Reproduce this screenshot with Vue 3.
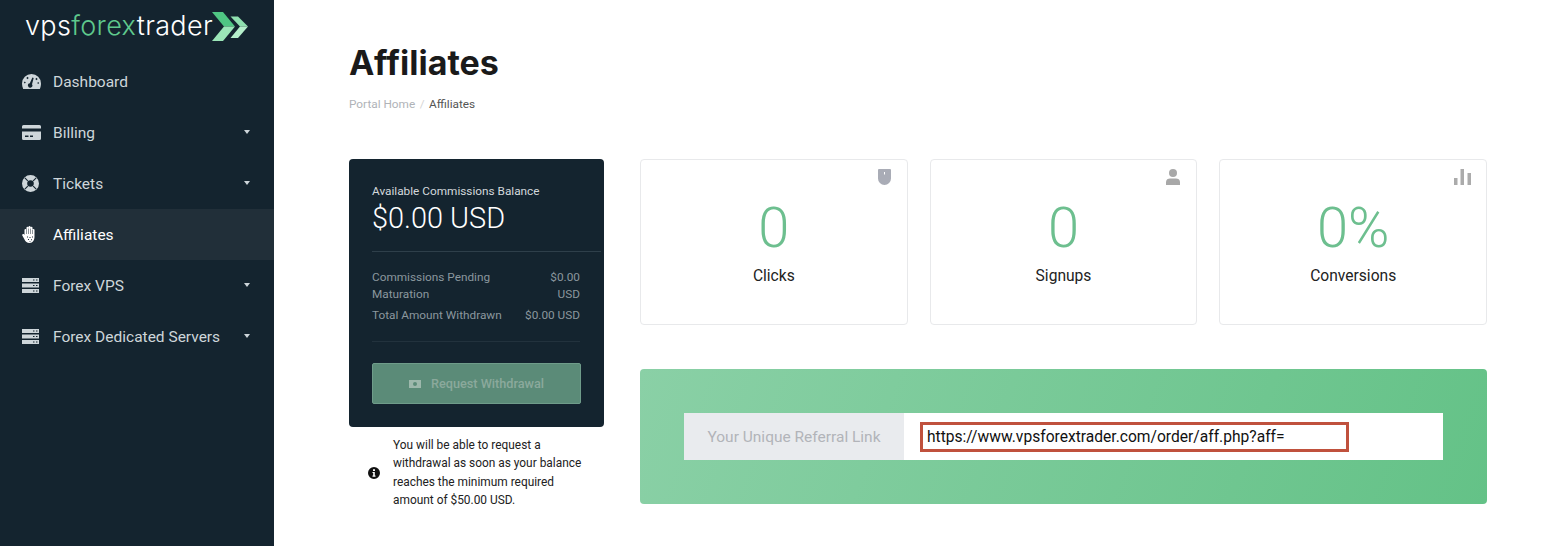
<template>
  <div class="layout">
    <aside class="sidebar">
      <div class="logo">
        <span class="logo-text">vps<span class="logo-green">forex</span>trader</span>
        <svg class="logo-mark" width="36" height="29" viewBox="0 0 36 29">
          <path d="M0 0H11L23 14.500H12Z" fill="#4fc583" />
          <path d="M12 14.500H23L11 29H0Z" fill="#9be6b8" />
          <path d="M18.500 4.500H26L36 14.500H28Z" fill="#8fe0af" />
          <path d="M28 14.500H36L26 26H18.500Z" fill="#b5efcb" />
        </svg>
      </div>
      <nav>
        <a v-for="item in menu" :key="item.label" class="nav-item" :class="{ active: item.active }">
          <span class="nav-icon">
            <svg v-if="item.icon === 'gauge'" width="19" height="15" viewBox="0 0 19 15">
              <path fill-rule="evenodd" d="M9.500 0A9.500 9.500 0 0 1 19 9.500C19 11.200 18.600 13.300 17.800 15H1.200C.4 13.300 0 11.200 0 9.500A9.500 9.500 0 0 1 9.500 0ZM10.400 3.500 7.800 9.200A2.200 2.200 0 1 0 10 10.200L11.700 4ZM5.500 2.800 4.300 4 5.500 5.200 6.700 4ZM14.500 3.800 13.300 5 14.500 6.200 15.700 5ZM2.800 7.500 1.800 8.500 2.800 9.500 3.800 8.500ZM16.200 8 15.200 9 16.200 10 17.200 9Z" fill="#ced6da" />
            </svg>
            <svg v-else-if="item.icon === 'card'" width="19" height="15" viewBox="0 0 19 15">
              <path fill-rule="evenodd" d="M1.500 0H17.500A1.500 1.500 0 0 1 19 1.500V3.500H0V1.500A1.500 1.500 0 0 1 1.500 0ZM0 6.500H19V13.500A1.500 1.500 0 0 1 17.500 15H1.500A1.500 1.500 0 0 1 0 13.500ZM3 10.500V12H6.500V10.500ZM8 10.500V12H11V10.500Z" fill="#ced6da" />
            </svg>
            <svg v-else-if="item.icon === 'lifebuoy'" width="17" height="17" viewBox="0 0 17 17">
              <path fill-rule="evenodd" d="M8.500 0A8.500 8.500 0 1 1 8.500 17A8.500 8.500 0 1 1 8.500 0ZM8.500 5.200A3.300 3.300 0 1 0 8.500 11.800A3.300 3.300 0 1 0 8.500 5.200Z" fill="#ced6da" />
              <path d="M2.800 2.800 5.800 5.800M14.200 2.800 11.200 5.800M2.800 14.200 5.800 11.200M14.200 14.200 11.200 11.200" stroke="#14242f" stroke-width="1.100" />
            </svg>
            <svg v-else-if="item.icon === 'hand'" width="15" height="17" viewBox="0 0 15 17">
              <path fill-rule="evenodd" d="M2.500 4A1 1 0 0 1 4.500 4V1.800A1 1 0 0 1 6.500 1.800V1A1 1 0 0 1 8.500 1V1.800A1 1 0 0 1 10.500 1.800V4A1 1 0 0 1 12.500 4V10.500C12.500 14 11 17 7.500 17C5 17 3.500 15.500 2.500 13.500L.3 9.500C-.2 8.500 1.200 7.300 2 8.300L2.500 9ZM4.500 3.500V8H5V3.500ZM6.500 2.500V8H7V2.500ZM8.500 2.500V8H9V2.500ZM10.500 4V8H11V4ZM5 10.500H6V11.500H5ZM7.500 11H8.500V12H7.500ZM10 10.500H11V11.500H10ZM6 13H7V14H6ZM9 13.200H10V14.200H9ZM7.500 15H8.500V15.800H7.500Z" fill="#ffffff" />
            </svg>
            <svg v-else width="17" height="15" viewBox="0 0 17 15">
              <path fill-rule="evenodd" d="M0 0H17V4H0ZM11 1.500V2.500H12.500V1.500ZM14 1.500V2.500H15.500V1.500ZM0 5.500H17V9.500H0ZM11 7V8H12.500V7ZM14 7V8H15.500V7ZM0 11H17V15H0ZM11 12.500V13.500H12.500V12.500ZM14 12.500V13.500H15.500V12.500Z" fill="#ced6da" />
            </svg>
          </span>
          <span class="nav-label">{{ item.label }}</span>
          <span v-if="item.caret" class="caret"></span>
        </a>
      </nav>
    </aside>

    <main class="content">
      <h1>Affiliates</h1>
      <div class="breadcrumb">
        <span class="crumb-link">Portal Home</span>
        <span class="crumb-sep">/</span>
        <span>Affiliates</span>
      </div>

      <div class="columns">
        <div class="left-col">
          <div class="balance">
            <div class="balance-label">Available Commissions Balance</div>
            <div class="balance-value">$0.00 USD</div>
            <div class="balance-rows">
              <div class="balance-row">
                <span>Commissions Pending Maturation</span>
                <span class="amount narrow">$0.00 USD</span>
              </div>
              <div class="balance-row">
                <span>Total Amount Withdrawn</span>
                <span class="amount">$0.00 USD</span>
              </div>
            </div>
            <button class="withdraw" disabled>
              <svg width="12" height="8" viewBox="0 0 12 8">
                <path fill-rule="evenodd" d="M0 0H12V8H0ZM6 2A2 2 0 1 0 6 6A2 2 0 1 0 6 2Z" fill="#9db8ac" />
              </svg>
              Request Withdrawal
            </button>
          </div>
          <div class="notice">
            <svg class="notice-icon" width="12" height="12" viewBox="0 0 12 12">
              <path fill-rule="evenodd" d="M6 0A6 6 0 1 1 6 12A6 6 0 1 1 6 0ZM5 2.300V4H7V2.300ZM4.500 5V6H5.200V8.500H4.500V9.700H7.500V8.500H6.800V5Z" fill="#111" />
            </svg>
            <p>You will be able to request a withdrawal as soon as your balance reaches the minimum required amount of $50.00 USD.</p>
          </div>
        </div>

        <div class="right-col">
          <div class="stats">
            <div v-for="stat in stats" :key="stat.label" class="stat">
              <svg v-if="stat.icon === 'mouse'" class="stat-icon" width="13" height="16" viewBox="0 0 13 16">
                <path fill-rule="evenodd" d="M1 0H12A1 1 0 0 1 13 1V9.500A6.500 6.500 0 0 1 0 9.500V1A1 1 0 0 1 1 0ZM6 3V5.500H7V3Z" fill="#a9acb6" />
              </svg>
              <svg v-else-if="stat.icon === 'user'" class="stat-icon" width="14" height="16" viewBox="0 0 14 16">
                <circle cx="7" cy="4" r="4" fill="#a8a8a8" />
                <path d="M0 16V13C0 10.500 2 9.500 4 9.500H10C12 9.500 14 10.500 14 13V16Z" fill="#a8a8a8" />
              </svg>
              <svg v-else class="stat-icon chart" width="17" height="16" viewBox="0 0 17 16">
                <path d="M0 9H3.500V16H0ZM6.500 0H10V16H6.500ZM13.500 4H17V16H13.500Z" fill="#ababab" />
              </svg>
              <div class="stat-value">{{ stat.value }}</div>
              <div class="stat-label">{{ stat.label }}</div>
            </div>
          </div>

          <div class="referral">
            <div class="referral-group">
              <div class="referral-label">Your Unique Referral Link</div>
              <div class="referral-input">
                <span class="referral-url">https://www.vpsforextrader.com/order/aff.php?aff=</span>
              </div>
            </div>
          </div>
        </div>
      </div>
    </main>
  </div>
</template>

<script setup>
const menu = [
  { label: 'Dashboard', icon: 'gauge' },
  { label: 'Billing', icon: 'card', caret: true },
  { label: 'Tickets', icon: 'lifebuoy', caret: true },
  { label: 'Affiliates', icon: 'hand', active: true },
  { label: 'Forex VPS', icon: 'server', caret: true },
  { label: 'Forex Dedicated Servers', icon: 'server', caret: true }
]

const stats = [
  { label: 'Clicks', value: '0', icon: 'mouse' },
  { label: 'Signups', value: '0', icon: 'user' },
  { label: 'Conversions', value: '0%', icon: 'chart' }
]
</script>

<style>
html, body {
  margin: 0;
  background: #fff;
}
</style>

<style scoped>
.layout {
  display: flex;
  height: 546px;
  overflow: hidden;
  font-family: Roboto, "Liberation Sans", sans-serif;
  color: #1a1a1a;
}

.sidebar {
  width: 274px;
  flex-shrink: 0;
  background: #14242f;
}

.logo {
  height: 56px;
  padding: 12px 0 0 25px;
  box-sizing: border-box;
  display: flex;
  align-items: flex-start;
  gap: 0;
}

.logo-text {
  width: 187px;
  font-family: Inter, sans-serif;
  font-size: 27px;
  font-weight: 300;
  letter-spacing: 0.350px;
  line-height: 27px;
  white-space: nowrap;
  color: #fff;
}

.logo-green {
  color: #5fc98d;
}

.nav-item {
  display: flex;
  align-items: center;
  height: 51px;
  padding: 0 24px 0 22px;
  font-size: 15.500px;
  color: #ced6da;
}

.nav-item.active {
  background: #212f39;
  color: #fff;
}

.nav-icon {
  width: 31px;
  display: flex;
  align-items: center;
}

.nav-label {
  flex: 1;
}

.caret {
  width: 0;
  height: 0;
  margin-top: -2px;
  border-left: 3.500px solid transparent;
  border-right: 3.500px solid transparent;
  border-top: 4px solid #ced6da;
}

.content {
  flex: 1;
  padding: 0 75px;
}

h1 {
  margin: 42px 0 0;
  font-family: Inter, sans-serif;
  font-size: 34px;
  font-weight: 700;
  line-height: 42px;
  color: #1a1a1a;
}

.breadcrumb {
  margin-top: 12px;
  display: flex;
  gap: 4.500px;
  font-size: 11.800px;
  line-height: 16px;
  color: #555;
}

.crumb-link {
  color: #b0b3b8;
}

.crumb-sep {
  color: #d5d5d5;
}

.columns {
  display: flex;
  gap: 36px;
  margin-top: 47px;
}

.left-col {
  width: 255px;
  flex-shrink: 0;
}

.balance {
  height: 268px;
  box-sizing: border-box;
  padding: 25px 0 0 23px;
  background: #14242f;
  border-radius: 4px;
  color: #fff;
}

.balance-label {
  font-size: 11.800px;
  line-height: 14px;
  color: #d3d8dc;
}

.balance-value {
  margin-top: 3px;
  font-size: 28.900px;
  font-weight: 300;
  line-height: 34px;
  padding-bottom: 16px;
  margin-right: 3px;
  border-bottom: 1px solid #2e3f4a;
}

.balance-rows {
  margin-right: 24px;
  padding: 17px 0 17px;
  border-bottom: 1px solid #22323d;
  font-size: 11.800px;
  color: #8b979e;
}

.balance-row {
  display: flex;
  justify-content: space-between;
  gap: 20px;
  line-height: 17px;
  margin-bottom: 4px;
}

.balance-row:last-child {
  margin-bottom: 0;
}

.amount {
  text-align: right;
  flex-shrink: 0;
}

.amount.narrow {
  width: 36px;
}

.withdraw {
  display: flex;
  align-items: center;
  justify-content: center;
  gap: 10px;
  width: 209px;
  height: 41px;
  margin-top: 21px;
  background: #5b8b78;
  border: 1px solid #6f9c8a;
  border-radius: 2px;
  font-family: inherit;
  font-size: 12.700px;
  font-weight: 500;
  color: #8ba99c;
}

.notice {
  display: flex;
  align-items: center;
  padding: 9px 20px 0 19px;
}

.notice-icon {
  flex-shrink: 0;
  margin-right: 13px;
}

.notice p {
  margin: 0;
  font-size: 11.900px;
  line-height: 18.300px;
  color: #222;
}

.right-col {
  flex: 1;
  min-width: 0;
}

.stats {
  display: grid;
  grid-template-columns: repeat(3, 1fr);
  gap: 22px;
}

.stat {
  position: relative;
  height: 166px;
  box-sizing: border-box;
  padding-top: 35px;
  border: 1px solid #e8e9eb;
  border-radius: 4px;
  text-align: center;
}

.stat-icon {
  position: absolute;
  top: 9px;
  right: 16px;
}

.stat-icon.chart {
  right: 15px;
}

.stat-value {
  font-size: 56px;
  font-weight: 300;
  line-height: 66px;
  color: #6dbf8f;
}

.stat-label {
  margin-top: 6px;
  font-size: 15.600px;
  line-height: 18px;
  color: #222;
}

.referral {
  margin-top: 44px;
  height: 135px;
  box-sizing: border-box;
  padding: 44px;
  background: linear-gradient(110deg, #8ad0a6, #64c287);
  border-radius: 4px;
}

.referral-group {
  display: flex;
  height: 47px;
}

.referral-label {
  width: 220px;
  display: flex;
  align-items: center;
  justify-content: center;
  background: #e9ebee;
  font-size: 15.500px;
  color: #b2b4b9;
}

.referral-input {
  flex: 1;
  display: flex;
  align-items: center;
  padding-left: 16px;
  background: #fff;
}

.referral-url {
  width: 429px;
  height: 30px;
  box-sizing: border-box;
  border: 3px solid #c0513d;
  padding-left: 4px;
  font-size: 15.600px;
  line-height: 24px;
  color: #111;
}
</style>
